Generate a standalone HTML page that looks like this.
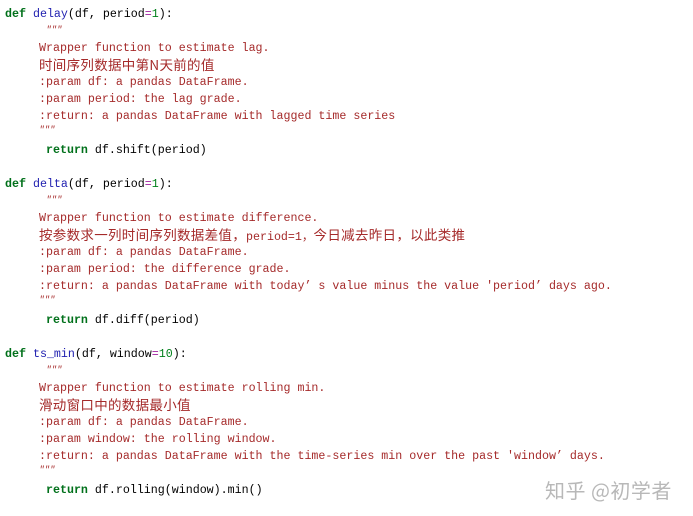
<!DOCTYPE html>
<html><head><meta charset="utf-8"><style>
body{margin:0;width:693px;height:516px;background:#fff;overflow:hidden;position:relative;
font-family:"Liberation Mono","Noto Sans CJK SC",monospace;font-size:11.65px;}
.l{position:absolute;white-space:pre;line-height:17px;height:17px;color:#000;}
.k{color:#00701a;font-weight:bold}
.f{color:#2020b0}
.o{color:#a020a0}
.n{color:#00801a}
.s{color:#a52a2a}
.c{font-family:"Noto Sans CJK SC","WenQuanYi Zen Hei",sans-serif;font-size:13.5px;letter-spacing:0.3px}
.q{color:#a52a2a;font-size:9px;font-style:italic}
.wm{position:absolute;left:545px;top:475px;color:#b8b8b8;font-family:"Noto Sans CJK SC",sans-serif;font-size:20px;letter-spacing:0.5px;white-space:pre}
</style></head><body>

<div class="l" style="left:5px;top:6px"><span class="k">def</span> <span class="f">delay</span>(df, period<span class="o">=</span><span class="n">1</span>):</div>
<div class="l q" style="left:46px;top:22px">"""</div>
<div class="l s" style="left:39px;top:40px">Wrapper function to estimate lag.</div>
<div class="l s c" style="left:39px;top:56px">时间序列数据中第N天前的值</div>
<div class="l s" style="left:39px;top:74px">:param df: a pandas DataFrame.</div>
<div class="l s" style="left:39px;top:91px">:param period: the lag grade.</div>
<div class="l s" style="left:39px;top:108px">:return: a pandas DataFrame with lagged time series</div>
<div class="l q" style="left:39px;top:122px">"""</div>
<div class="l" style="left:46px;top:142px"><span class="k">return</span> df.shift(period)</div>

<div class="l" style="left:5px;top:176px"><span class="k">def</span> <span class="f">delta</span>(df, period<span class="o">=</span><span class="n">1</span>):</div>
<div class="l q" style="left:46px;top:192px">"""</div>
<div class="l s" style="left:39px;top:210px">Wrapper function to estimate difference.</div>
<div class="l s" style="left:39px;top:226px"><span class="c">按参数求一列时间序列数据差值，</span>period=1，<span class="c">今日减去昨日，以此类推</span></div>
<div class="l s" style="left:39px;top:244px">:param df: a pandas DataFrame.</div>
<div class="l s" style="left:39px;top:261px">:param period: the difference grade.</div>
<div class="l s" style="left:39px;top:278px">:return: a pandas DataFrame with today’ s value minus the value 'period’ days ago.</div>
<div class="l q" style="left:39px;top:292px">"""</div>
<div class="l" style="left:46px;top:312px"><span class="k">return</span> df.diff(period)</div>

<div class="l" style="left:5px;top:346px"><span class="k">def</span> <span class="f">ts_min</span>(df, window<span class="o">=</span><span class="n">10</span>):</div>
<div class="l q" style="left:46px;top:362px">"""</div>
<div class="l s" style="left:39px;top:380px">Wrapper function to estimate rolling min.</div>
<div class="l s c" style="left:39px;top:396px">滑动窗口中的数据最小值</div>
<div class="l s" style="left:39px;top:414px">:param df: a pandas DataFrame.</div>
<div class="l s" style="left:39px;top:431px">:param window: the rolling window.</div>
<div class="l s" style="left:39px;top:448px">:return: a pandas DataFrame with the time-series min over the past 'window’ days.</div>
<div class="l q" style="left:39px;top:462px">"""</div>
<div class="l" style="left:46px;top:482px"><span class="k">return</span> df.rolling(window).min()</div>

<div class="wm">知乎 @初学者</div>
</body></html>
